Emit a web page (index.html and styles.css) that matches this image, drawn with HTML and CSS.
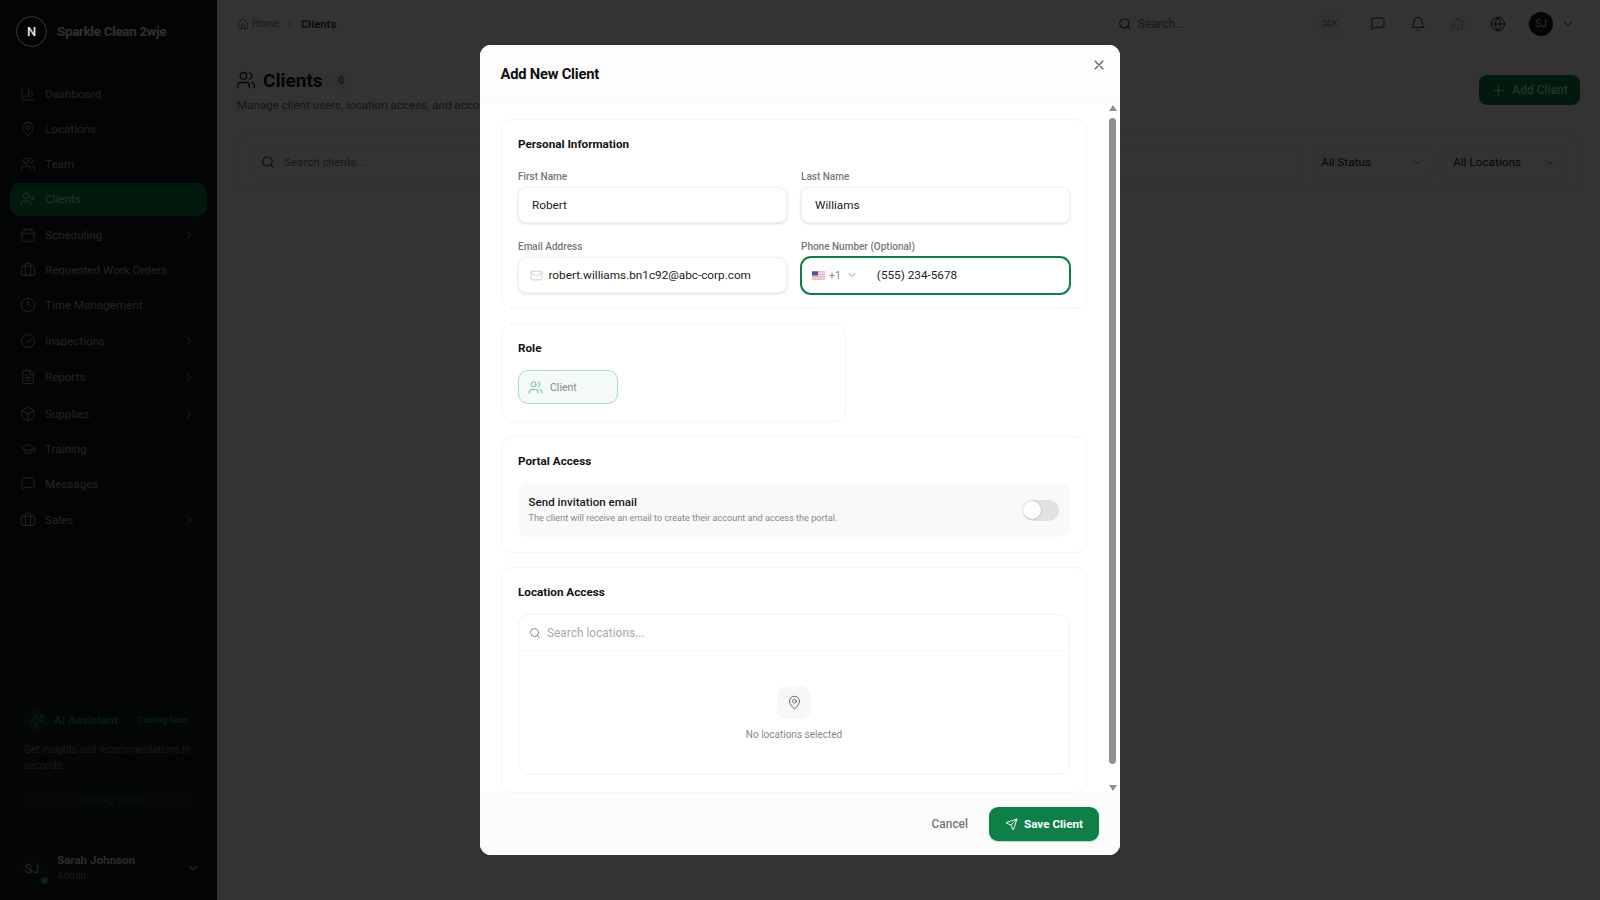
FILE: index.html
```html
<!DOCTYPE html>
<html lang="en">
<head>
<meta charset="utf-8">
<title>Clients</title>
<link rel="stylesheet" href="styles.css">
</head>
<body>
<svg class="defs" aria-hidden="true">
<symbol id="i-chart" viewBox="0 0 24 24"><path d="M3 3v16a2 2 0 0 0 2 2h16M18 17V9M13 17V5M8 17v-3"/></symbol>
<symbol id="i-pin" viewBox="0 0 24 24"><path d="M20 10c0 4.993-5.539 10.193-7.399 11.799a1 1 0 0 1-1.202 0C9.539 20.193 4 14.993 4 10a8 8 0 0 1 16 0"/><circle cx="12" cy="10" r="3"/></symbol>
<symbol id="i-users" viewBox="0 0 24 24"><path d="M16 21v-2a4 4 0 0 0-4-4H6a4 4 0 0 0-4 4v2"/><circle cx="9" cy="7" r="4"/><path d="M22 21v-2a4 4 0 0 0-3-3.87M16 3.13a4 4 0 0 1 0 7.75"/></symbol>
<symbol id="i-userplus" viewBox="0 0 24 24"><path d="M16 21v-2a4 4 0 0 0-4-4H6a4 4 0 0 0-4 4v2"/><circle cx="9" cy="7" r="4"/><path d="M19 8v6M22 11h-6"/></symbol>
<symbol id="i-cal" viewBox="0 0 24 24"><rect x="3" y="4" width="18" height="18" rx="2"/><path d="M16 2v4M8 2v4M3 10h18"/></symbol>
<symbol id="i-brief" viewBox="0 0 24 24"><path d="M16 20V4a2 2 0 0 0-2-2h-4a2 2 0 0 0-2 2v16"/><rect x="2" y="6" width="20" height="14" rx="2"/></symbol>
<symbol id="i-clock" viewBox="0 0 24 24"><circle cx="12" cy="12" r="10"/><path d="M12 6v6l4 2"/></symbol>
<symbol id="i-check" viewBox="0 0 24 24"><path d="M21.801 10A10 10 0 1 1 17 3.335"/><path d="m9 11 3 3L22 4"/></symbol>
<symbol id="i-file" viewBox="0 0 24 24"><path d="M15 2H6a2 2 0 0 0-2 2v16a2 2 0 0 0 2 2h12a2 2 0 0 0 2-2V7Z"/><path d="M14 2v4a2 2 0 0 0 2 2h4M10 9H8M16 13H8M16 17H8"/></symbol>
<symbol id="i-box" viewBox="0 0 24 24"><path d="M21 8a2 2 0 0 0-1-1.73l-7-4a2 2 0 0 0-2 0l-7 4A2 2 0 0 0 3 8v8a2 2 0 0 0 1 1.73l7 4a2 2 0 0 0 2 0l7-4A2 2 0 0 0 21 16Z"/><path d="m3.3 7 8.7 5 8.7-5M12 22V12"/></symbol>
<symbol id="i-cap" viewBox="0 0 24 24"><path d="M21.42 10.922a1 1 0 0 0-.019-1.838L12.83 5.18a2 2 0 0 0-1.66 0L2.6 9.08a1 1 0 0 0 0 1.832l8.57 3.908a2 2 0 0 0 1.66 0z"/><path d="M22 10v6M6 12.5V16a6 3 0 0 0 12 0v-3.5"/></symbol>
<symbol id="i-msg" viewBox="0 0 24 24"><path d="M21 15a2 2 0 0 1-2 2H7l-4 4V5a2 2 0 0 1 2-2h14a2 2 0 0 1 2 2z"/></symbol>
<symbol id="i-spark" viewBox="0 0 24 24"><path d="M9.937 15.5A2 2 0 0 0 8.5 14.063l-6.135-1.582a.5.5 0 0 1 0-.962L8.5 9.936A2 2 0 0 0 9.937 8.5l1.582-6.135a.5.5 0 0 1 .963 0L14.063 8.5A2 2 0 0 0 15.5 9.937l6.135 1.581a.5.5 0 0 1 0 .964L15.5 14.063a2 2 0 0 0-1.437 1.437l-1.582 6.135a.5.5 0 0 1-.963 0z"/><path d="M20 3v4M22 5h-4M4 17v2M5 18H3"/></symbol>
<symbol id="i-home" viewBox="0 0 24 24"><path d="M15 21v-8a1 1 0 0 0-1-1h-4a1 1 0 0 0-1 1v8"/><path d="M3 10a2 2 0 0 1 .709-1.528l7-5.999a2 2 0 0 1 2.582 0l7 5.999A2 2 0 0 1 21 10v9a2 2 0 0 1-2 2H5a2 2 0 0 1-2-2z"/></symbol>
<symbol id="i-search" viewBox="0 0 24 24"><circle cx="11" cy="11" r="8"/><path d="m21 21-4.3-4.3"/></symbol>
<symbol id="i-bell" viewBox="0 0 24 24"><path d="M6 8a6 6 0 0 1 12 0c0 7 3 9 3 9H3s3-2 3-9M10.3 21a1.94 1.94 0 0 0 3.4 0"/></symbol>
<symbol id="i-bug" viewBox="0 0 24 24"><path d="m8 2 1.88 1.88M14.12 3.88 16 2M9 7.13v-1a3.003 3.003 0 1 1 6 0v1"/><path d="M12 20c-3.3 0-6-2.7-6-6v-3a4 4 0 0 1 4-4h4a4 4 0 0 1 4 4v3c0 3.3-2.7 6-6 6M12 20v-9M6.53 9C4.6 8.8 3 7.1 3 5M6 13H2M3 21c0-2.1 1.7-3.9 3.8-4M20.97 5c0 2.1-1.6 3.8-3.5 4M22 13h-4M17.2 17c2.1.1 3.8 1.9 3.8 4"/></symbol>
<symbol id="i-globe" viewBox="0 0 24 24"><circle cx="12" cy="12" r="10"/><path d="M12 2a14.5 14.5 0 0 0 0 20 14.5 14.5 0 0 0 0-20M2 12h20"/></symbol>
<symbol id="i-right" viewBox="0 0 24 24"><path d="m9 18 6-6-6-6"/></symbol>
<symbol id="i-down" viewBox="0 0 24 24"><path d="m6 9 6 6 6-6"/></symbol>
<symbol id="i-plus" viewBox="0 0 24 24"><path d="M5 12h14M12 5v14"/></symbol>
<symbol id="i-x" viewBox="0 0 24 24"><path d="M18 6 6 18M6 6l12 12"/></symbol>
<symbol id="i-mail" viewBox="0 0 24 24"><rect x="2" y="4" width="20" height="16" rx="2"/><path d="m22 7-8.97 5.7a1.94 1.94 0 0 1-2.06 0L2 7"/></symbol>
<symbol id="i-send" viewBox="0 0 24 24"><path d="M14.536 21.686a.5.5 0 0 0 .937-.024l6.5-19a.496.496 0 0 0-.635-.635l-19 6.5a.5.5 0 0 0-.024.937l7.93 3.18a2 2 0 0 1 1.112 1.11z"/><path d="m21.854 2.147-10.94 10.939"/></symbol>
</svg>

<div class="app">
  <aside class="sidebar">
    <div class="brand">
      <div class="logo">N</div>
      <div class="brand-name">Sparkle Clean 2wje</div>
    </div>
    <nav class="nav">
      <a class="nav-item"><svg class="ic"><use href="#i-chart"/></svg><span>Dashboard</span></a>
      <a class="nav-item"><svg class="ic"><use href="#i-pin"/></svg><span>Locations</span></a>
      <a class="nav-item"><svg class="ic"><use href="#i-users"/></svg><span>Team</span></a>
      <a class="nav-item active"><svg class="ic"><use href="#i-userplus"/></svg><span>Clients</span></a>
      <a class="nav-item tall"><svg class="ic"><use href="#i-cal"/></svg><span>Scheduling</span><svg class="chev"><use href="#i-right"/></svg></a>
      <a class="nav-item"><svg class="ic"><use href="#i-brief"/></svg><span>Requested Work Orders</span></a>
      <a class="nav-item"><svg class="ic"><use href="#i-clock"/></svg><span>Time Management</span></a>
      <a class="nav-item tall"><svg class="ic"><use href="#i-check"/></svg><span>Inspections</span><svg class="chev"><use href="#i-right"/></svg></a>
      <a class="nav-item tall"><svg class="ic"><use href="#i-file"/></svg><span>Reports</span><svg class="chev"><use href="#i-right"/></svg></a>
      <a class="nav-item tall"><svg class="ic"><use href="#i-box"/></svg><span>Supplies</span><svg class="chev"><use href="#i-right"/></svg></a>
      <a class="nav-item"><svg class="ic"><use href="#i-cap"/></svg><span>Training</span></a>
      <a class="nav-item"><svg class="ic"><use href="#i-msg"/></svg><span>Messages</span></a>
      <a class="nav-item tall"><svg class="ic"><use href="#i-brief"/></svg><span>Sales</span><svg class="chev"><use href="#i-right"/></svg></a>
    </nav>
    <div class="ai-card">
      <div class="ai-head">
        <div class="ai-icon"><svg class="ic-ai"><use href="#i-spark"/></svg></div>
        <div class="ai-title">AI Assistant</div>
        <div class="ai-tag">Coming Soon</div>
      </div>
      <p class="ai-text">Get insights and recommendations in seconds.</p>
      <div class="ai-btn">Coming Soon</div>
    </div>
    <div class="user">
      <div class="user-avatar">SJ<i class="dot"></i></div>
      <div class="user-info">
        <div class="user-name">Sarah Johnson</div>
        <div class="user-role">Admin</div>
      </div>
      <svg class="user-chev"><use href="#i-down"/></svg>
    </div>
  </aside>

  <main class="main">
    <header class="topbar">
      <div class="crumbs">
        <svg class="crumb-home"><use href="#i-home"/></svg>
        <span class="crumb-link">Home</span>
        <svg class="crumb-sep"><use href="#i-right"/></svg>
        <span class="crumb-cur">Clients</span>
      </div>
      <div class="top-search">
        <svg class="ts-icon"><use href="#i-search"/></svg>
        <span class="ts-text">Search...</span>
        <span class="kbd">⌘K</span>
      </div>
      <div class="top-icons">
        <svg class="top-ic"><use href="#i-msg"/></svg>
        <svg class="top-ic"><use href="#i-bell"/></svg>
        <svg class="top-ic faint"><use href="#i-bug"/></svg>
        <svg class="top-ic"><use href="#i-globe"/></svg>
      </div>
      <div class="top-avatar">SJ</div>
      <svg class="top-chev"><use href="#i-down"/></svg>
    </header>
    <section class="page">
      <div class="page-head">
        <div>
          <div class="title-row">
            <svg class="title-ic"><use href="#i-users"/></svg>
            <h1>Clients</h1>
            <span class="count">0</span>
          </div>
          <p class="subtitle">Manage client users, location access, and account settings</p>
        </div>
        <button class="add-btn"><svg class="add-ic"><use href="#i-plus"/></svg>Add Client</button>
      </div>
      <div class="filters">
        <div class="f-search"><svg class="f-ic"><use href="#i-search"/></svg><span>Search clients...</span></div>
        <div class="f-select status"><span>All Status</span><svg class="f-chev"><use href="#i-down"/></svg></div>
        <div class="f-select locs"><span>All Locations</span><svg class="f-chev"><use href="#i-down"/></svg></div>
      </div>
    </section>
  </main>
</div>

<div class="overlay">
  <div class="modal">
    <div class="m-head">
      <h2>Add New Client</h2>
      <svg class="m-close"><use href="#i-x"/></svg>
    </div>
    <div class="m-body">
      <section class="card">
        <h3>Personal Information</h3>
        <div class="grid">
          <div class="field">
            <label>First Name</label>
            <div class="input">Robert</div>
          </div>
          <div class="field">
            <label>Last Name</label>
            <div class="input">Williams</div>
          </div>
          <div class="field">
            <label>Email Address</label>
            <div class="input with-icon"><svg class="mail"><use href="#i-mail"/></svg>robert.williams.bn1c92@abc-corp.com</div>
          </div>
          <div class="field">
            <label>Phone Number (Optional)</label>
            <div class="input phone">
              <svg class="flag" viewBox="0 0 14 9"><rect width="14" height="9" fill="#e8a0a8"/><rect y="1.3" width="14" height="1.3" fill="#f8f0f0"/><rect y="3.9" width="14" height="1.3" fill="#f8f0f0"/><rect y="6.5" width="14" height="1.3" fill="#f8f0f0"/><rect width="6.5" height="4.5" fill="#4a5a96"/></svg>
              <span class="dial">+1</span>
              <svg class="dial-chev"><use href="#i-down"/></svg>
              <span class="num">(555) 234-5678</span>
            </div>
          </div>
        </div>
      </section>

      <section class="card role-card">
        <h3>Role</h3>
        <div class="role-opt"><svg class="role-ic"><use href="#i-users"/></svg>Client</div>
      </section>

      <section class="card portal-card">
        <h3>Portal Access</h3>
        <div class="invite">
          <div>
            <div class="inv-title">Send invitation email</div>
            <div class="inv-sub">The client will receive an email to create their account and access the portal.</div>
          </div>
          <div class="toggle"><i class="knob"></i></div>
        </div>
      </section>

      <section class="card loc-card">
        <h3>Location Access</h3>
        <div class="loc-box">
          <div class="loc-search"><svg class="loc-s-ic"><use href="#i-search"/></svg><span>Search locations...</span></div>
          <div class="loc-empty">
            <div class="loc-tile"><svg class="loc-pin"><use href="#i-pin"/></svg></div>
            <div class="loc-text">No locations selected</div>
          </div>
        </div>
      </section>
    </div>
    <div class="m-foot">
      <button class="cancel">Cancel</button>
      <button class="save"><svg class="save-ic"><use href="#i-send"/></svg>Save Client</button>
    </div>
    <div class="scrollbar">
      <i class="arrow up"></i>
      <i class="thumb"></i>
      <i class="arrow down"></i>
    </div>
  </div>
</div>
</body>
</html>
```

FILE: styles.css
```css
* { box-sizing: border-box; }
html, body { margin: 0; padding: 0; height: 100%; }
body { font-family: Roboto, "Liberation Sans", sans-serif; background: #fff; color: #111; overflow: hidden; }
svg { fill: none; stroke: currentColor; stroke-width: 2; stroke-linecap: round; stroke-linejoin: round; display: block; flex: none; }
.defs { position: absolute; width: 0; height: 0; }
h1, h2, h3, p { margin: 0; }
button { font-family: inherit; border: 0; padding: 0; cursor: pointer; }

.app { display: flex; width: 1600px; height: 900px; }

/* sidebar */
.sidebar { width: 217px; flex: none; background: #13181e; color: #aab0b7; display: flex; flex-direction: column; padding: 0 10px; }
.brand { height: 63px; margin: 0 -10px; padding: 16px 16px 0; display: flex; align-items: flex-start; gap: 10px; }
.logo { position: relative; z-index: 1; width: 31px; height: 31px; border-radius: 50%; border: 1px solid #3a3a3a; color: #e8e8e8; background: #030405; font-size: 13px; font-weight: 500; display: flex; align-items: center; justify-content: center; }
.brand-name { font-size: 13.4px; font-weight: 700; color: #e8e8e8; line-height: 31px; white-space: nowrap; letter-spacing: -0.3px; }
.nav { margin-top: 14.5px; display: flex; flex-direction: column; gap: 2px; flex: 1; }
.nav-item { height: 33px; display: flex; align-items: center; padding: 0 11px 0 9.5px; border-radius: 10px; font-size: 11.65px; }
.nav-item.tall { height: 34.3px; }
.nav-item span { margin-left: 9.5px; flex: 1; white-space: nowrap; }
.nav-item.active { background: #0d7f47; color: #cfe9dc; }
.ic { width: 16px; height: 16px; stroke-width: 1.5; }
.chev { width: 14px; height: 14px; opacity: .6; }
.ai-card { height: 133px; border: 1px solid #172a22; background: #141c20; border-radius: 12px; padding: 11px 13px; margin-bottom: 16px; }
.ai-head { display: flex; align-items: center; height: 26px; }
.ai-icon { width: 24px; height: 24px; border-radius: 50%; background: #14352a; color: #1c9c62; display: flex; align-items: center; justify-content: center; }
.ic-ai { width: 15px; height: 15px; stroke-width: 1.7; }
.ai-title { margin-left: 6px; font-size: 11.7px; font-weight: 700; color: #199b5e; white-space: nowrap; }
.ai-tag { margin-left: 20px; font-size: 8.4px; font-weight: 700; color: #199b5e; white-space: nowrap; }
.ai-text { margin-top: 9px; font-size: 10px; line-height: 16px; color: #7f868c; }
.ai-btn { margin-top: 11px; height: 30px; border-radius: 8px; background: #15241f; color: #137a4b; font-size: 11.3px; display: flex; align-items: center; justify-content: center; }
.user { height: 48px; margin: 0 -10px 8px; padding: 0 16px; display: flex; align-items: center; }
.user-avatar { width: 34px; height: 34px; border-radius: 50%; margin-left: -1px; background: #1c2127; color: #c8c8c8; font-size: 12.5px; display: flex; align-items: center; justify-content: center; position: relative; flex: none; }
.dot { position: absolute; right: 1px; bottom: 1px; width: 7px; height: 7px; border-radius: 50%; background: #27b26f; }
.user-info { margin-left: 8px; flex: 1; }
.user-name { font-size: 11.6px; font-weight: 700; color: #d8d8d8; line-height: 15px; }
.user-role { font-size: 10px; color: #8a8f95; line-height: 15px; }
.user-chev { width: 16px; height: 16px; color: #aab0b7; stroke-width: 1.6; }

/* main */
.main { flex: 1; min-width: 0; background: #fff; }
.topbar { height: 47px; display: flex; align-items: center; padding: 0 24px 0 20px; }
.crumbs { display: flex; align-items: center; flex: 1; }
.crumb-home { width: 12px; height: 12px; color: #666; stroke-width: 1.7; }
.crumb-link { margin-left: 3px; font-size: 10px; color: #777; }
.crumb-sep { width: 10px; height: 10px; color: #888; margin: 0 5px 0 6px; }
.crumb-cur { font-size: 11.4px; font-weight: 500; color: #222; margin-left: 1px; }
.top-search { width: 229px; height: 36px; display: flex; align-items: center; margin-right: 23px; position: relative; border-radius: 8px; }
.ts-icon { width: 14px; height: 14px; color: #222; stroke-width: 1.8; }
.ts-text { margin-left: 6px; font-size: 12px; color: #777; }
.kbd { position: absolute; right: 6px; top: 9px; height: 18px; font-size: 10px; color: #999; line-height: 18px; padding: 0 3px; border-radius: 3px; background: #f8f8f8; }
.top-icons { display: flex; gap: 24px; align-items: center; }
.top-ic { width: 16px; height: 16px; color: #222; stroke-width: 1.5; }
.top-ic.faint { color: #aaa; }
.top-avatar { margin-left: 23px; width: 24px; height: 24px; border-radius: 50%; background: #141b22; color: #ddd; font-size: 10px; display: flex; align-items: center; justify-content: center; }
.top-chev { width: 16px; height: 16px; color: #666; stroke-width: 1.6; margin-left: 7px; }
.page { padding: 22px 20px 0; }
.page-head { display: flex; justify-content: space-between; align-items: flex-start; }
.title-row { display: flex; align-items: center; height: 28px; margin-top: -3px; }
.title-ic { width: 20px; height: 20px; margin-left: -1px; color: #222; stroke-width: 1.6; }
h1 { font-size: 19px; font-weight: 700; margin-left: 7px; color: #111; }
.count { margin-left: 10px; width: 17px; height: 17px; border-radius: 5px; background: #f0f2f1; color: #178552; font-size: 10px; font-weight: 600; display: flex; align-items: center; justify-content: center; }
.subtitle { margin-top: 4px; font-size: 11.6px; line-height: 15px; color: #666; white-space: nowrap; }
.add-btn { width: 101px; height: 30px; border-radius: 8px; background: #0d7f47; color: #cfe9dc; font-size: 12px; font-weight: 500; display: flex; align-items: center; justify-content: center; gap: 6px; margin-top: 6px; }
.add-ic { width: 15px; height: 15px; stroke-width: 1.7; }
.filters { margin-top: 21px; height: 56px; border: 1px solid #f0f0f0; border-radius: 10px; display: flex; align-items: center; padding: 0 14px; }
.f-search { flex: 1; display: flex; align-items: center; height: 33px; color: #777; font-size: 11.6px; border: 1px solid #f6f6f6; border-radius: 8px; margin-right: 10px; }
.f-ic { width: 14px; height: 14px; margin: 0 9px 0 8px; color: #222; stroke-width: 1.8; }
.f-select { height: 33px; display: flex; align-items: center; justify-content: space-between; font-size: 11.8px; color: #222; padding: 0 8px; border: 1px solid #f6f6f6; border-radius: 8px; }
.status { width: 121px; margin-right: 7px; }
.locs { width: 125px; padding-left: 12px; padding-right: 8px; }
.f-chev { width: 13px; height: 13px; color: #666; stroke-width: 1.7; }

/* overlay + modal */
.overlay { position: fixed; inset: 0; background: rgba(0,0,0,.8); display: flex; align-items: center; justify-content: center; }
.modal { position: relative; width: 640px; height: 810px; background: #fff; border-radius: 11px; display: flex; flex-direction: column; overflow: hidden; }
.m-head { height: 58px; flex: none; display: flex; align-items: center; justify-content: space-between; padding: 0 13px 0 20.5px; border-bottom: 1px solid #f6f6f6; background: #fdfdfd; }
h2 { font-size: 14.7px; font-weight: 700; color: #0e0e0e; letter-spacing: -.2px; }
.m-close { width: 16px; height: 16px; color: #555; stroke-width: 1.6; margin-top: -17px; }
.m-body { flex: 1; min-height: 0; overflow: hidden; padding: 16px 33px 0 21px; display: flex; flex-direction: column; gap: 14px; }
.card { flex: none; border: 1px solid #f5f5f5; border-radius: 12px; padding: 16px 16px 0; background: #fff; }
h3 { font-size: 11.7px; font-weight: 700; color: #111; line-height: 16px; }
.grid { display: grid; grid-template-columns: 1fr 1fr; column-gap: 14px; row-gap: 18px; margin-top: 19px; padding-bottom: 15px; }
.field { min-width: 0; }
.field label { display: block; font-size: 10px; font-weight: 500; color: #777; line-height: 12px; margin-bottom: 4px; }
.input { height: 36px; border: 1px solid #f1f1f1; border-radius: 8px; box-shadow: 0 1px 3px rgba(0,0,0,.14); background: #fff; display: flex; align-items: center; padding: 0 13px; font-size: 11.75px; color: #222; white-space: nowrap; }
.with-icon { padding-left: 11px; }
.mail { width: 13px; height: 13px; color: #c2c2c2; margin-right: 5.5px; stroke-width: 1.5; }
.phone { border: 2px solid #0d7f47; border-radius: 11px; box-shadow: none; height: 39px; margin: -1.5px -1px; padding: 0 0 0 10px; }
.flag { width: 13px; height: 9px; stroke: none; }
.dial { margin-left: 4px; font-size: 10.5px; color: #888; }
.dial-chev { width: 12px; height: 12px; color: #888; margin-left: 5px; stroke-width: 1.8; }
.num { margin-left: 19px; }
.role-card { width: 345px; height: 99px; }
.role-opt { margin-top: 14px; width: 100px; height: 34px; border: 1.5px solid #aedacb; background: #f4faf7; border-radius: 10px; display: flex; align-items: center; padding-left: 9px; gap: 7px; font-size: 10.5px; color: #888; }
.role-ic { width: 15px; height: 15px; color: #6cb795; stroke-width: 1.6; }
.portal-card { height: 117px; }
.invite { margin-top: 14px; height: 54px; background: #f9f9f9; border-radius: 10px; display: flex; align-items: center; justify-content: space-between; padding: 0 11px 0 10.5px; }
.inv-title { font-size: 11.6px; font-weight: 500; color: #1a1a1a; line-height: 15px; }
.inv-sub { font-size: 9.15px; color: #888; line-height: 14px; margin-top: 1px; }
.toggle { width: 36px; height: 21px; border-radius: 11px; background: #e2e2e2; position: relative; }
.knob { position: absolute; left: 0; top: 1.5px; width: 18px; height: 18px; border-radius: 50%; background: #fff; box-shadow: 0 0 2px rgba(0,0,0,.3); }
.loc-card { height: 226px; }
.loc-box { margin-top: 14px; height: 161px; border: 1px solid #f3f3f3; border-radius: 12px; }
.loc-search { height: 36px; border-bottom: 1px solid #f7f7f7; display: flex; align-items: center; padding-left: 10px; font-size: 11.9px; color: #aaa; }
.loc-s-ic { width: 12px; height: 12px; color: #777; margin-right: 6px; stroke-width: 1.8; }
.loc-empty { display: flex; flex-direction: column; align-items: center; padding-top: 35px; }
.loc-tile { width: 34px; height: 33px; border-radius: 10px; background: #f7f7f7; display: flex; align-items: center; justify-content: center; }
.loc-pin { width: 15px; height: 15px; color: #666; stroke-width: 1.6; }
.loc-text { margin-top: 10px; font-size: 10px; color: #888; }
.m-foot { height: 62px; flex: none; background: #fcfcfc; display: flex; align-items: center; justify-content: flex-end; padding: 0 21px 0 0; gap: 21px; }
.cancel { background: none; color: #777; font-size: 11.9px; font-weight: 500; }
.save { width: 110px; height: 34px; border-radius: 9px; background: #0d7f47; color: #fff; font-size: 11.7px; font-weight: 700; display: flex; align-items: center; justify-content: center; gap: 6px; box-shadow: 0 1px 1px #a9dcc3; }
.save-ic { width: 13px; height: 13px; stroke-width: 1.7; }
.scrollbar { position: absolute; right: 3px; top: 60px; bottom: 62px; width: 8px; display: flex; flex-direction: column; align-items: center; justify-content: space-between; }
.thumb { position: absolute; top: 13px; bottom: 29px; left: 0; width: 7px; background: #8f8f8f; border-radius: 4px; }
.arrow { width: 0; height: 0; border-left: 4px solid transparent; border-right: 4px solid transparent; }
.arrow.up { border-bottom: 6px solid #8f8f8f; }
.arrow.down { border-top: 6px solid #8f8f8f; margin-bottom: 2px; }
```
